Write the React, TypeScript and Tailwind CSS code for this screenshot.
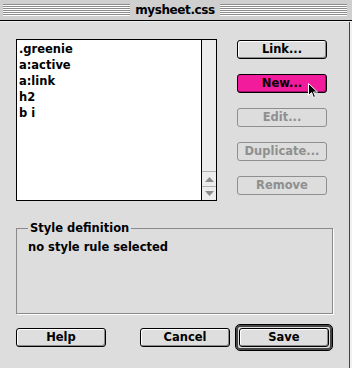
import React from 'react';

const font = "font-['DejaVu_Sans',sans-serif] font-bold text-[11.5px]";

const Stripes: React.FC<{ className?: string }> = ({ className = '' }) => (
  <div className={`flex flex-col ${className}`}>
    {[0, 1, 2, 3, 4, 5].map((i) => (
      <div key={i} className="h-[2px] border-t border-[#8c8c8c] border-b border-b-white" />
    ))}
  </div>
);

const Button: React.FC<{ label: string; disabled?: boolean; pink?: boolean; className?: string }> = ({
  label,
  disabled,
  pink,
  className = '',
}) => {
  if (disabled) {
    return (
      <div className={`w-[90px] h-[19px] rounded-[3px] border border-[#8f8f8f] flex items-center justify-center text-[#8f8f8f] ${className}`}>
        {label}
      </div>
    );
  }
  return (
    <div
      className={`w-[90px] h-[19px] rounded-[3px] border border-black flex items-center justify-center text-black ${
        pink
          ? 'bg-[#f11b9c] shadow-[inset_-1px_-1px_0_#a80f6a]'
          : 'bg-[#dedede] shadow-[inset_1px_1px_0_#ffffff,inset_-1px_-1px_0_#8a8a8a]'
      } ${className}`}
    >
      {label}
    </div>
  );
};

export default function App() {
  const rules = ['.greenie', 'a:active', 'a:link', 'h2', 'b i'];

  return (
    <div className={`w-[352px] h-[368px] bg-[#dddddd] flex flex-col overflow-hidden ${font}`}>
      {/* Title bar */}
      <div className="h-[21px] bg-[#cfcfcf] flex items-center pl-[3px] pr-[5px] border-b border-black">
        <Stripes className="flex-1" />
        <div className="px-[5px] text-[12px] tracking-[-0.4px] leading-none text-black">mysheet.css</div>
        <Stripes className="flex-1" />
      </div>
      <div className="h-px bg-[#eeeeee]" />

      <div className="flex flex-1">
        {/* Content */}
        <div className="w-[349px] flex flex-col pl-4 pt-[17px]">
          <div className="flex">
            {/* Rule list */}
            <div className="w-[201px] h-[162px] border border-black flex bg-white">
              <div className="flex-1 pt-[1px] pl-[2px] flex flex-col">
                {rules.map((r) => (
                  <div key={r} className="h-4 leading-4 text-black">
                    {r}
                  </div>
                ))}
              </div>
              <div className="w-[15px] border-l border-black bg-[#ececec] flex flex-col justify-end">
                <div className="h-[15px] border-t border-[#b0b0b0] flex items-center justify-center">
                  <svg width="9" height="5" viewBox="0 0 9 5">
                    <path d="M4.5 0 L9 5 L0 5 Z" fill="#8c8c8c" />
                  </svg>
                </div>
                <div className="h-[14px] border-t border-[#b0b0b0] flex items-center justify-center">
                  <svg width="9" height="5" viewBox="0 0 9 5">
                    <path d="M0 0 L9 0 L4.5 5 Z" fill="#8c8c8c" />
                  </svg>
                </div>
              </div>
            </div>

            {/* Buttons */}
            <div className="ml-5 pt-px flex flex-col gap-[15px]">
              <Button label="Link..." />
              <div className="relative">
                <Button label="New..." pink />
                <svg className="absolute left-[71px] top-[9px]" width="11" height="16" viewBox="0 0 11 16">
                  <path d="M0.5 0.5 L0.5 12.5 L3.5 9.5 L5.5 14.5 L7.5 13.5 L5.5 9 L9.5 9 Z" fill="black" stroke="white" strokeWidth="1" />
                </svg>
              </div>
              <Button label="Edit..." disabled />
              <Button label="Duplicate..." disabled />
              <Button label="Remove" disabled />
            </div>
          </div>

          {/* Style definition group */}
          <fieldset className="mt-[20px] w-[317px] h-[93px] border border-[#8a8a8a] shadow-[1px_1px_0_#ffffff] pl-[11px] pr-2">
            <legend className="px-[2px] text-black leading-[14px]">Style definition</legend>
            <div className="pt-[4px] text-black">no style rule selected</div>
          </fieldset>

          {/* Bottom buttons */}
          <div className="mt-[10px] flex items-center">
            <Button label="Help" />
            <Button label="Cancel" className="ml-[34px]" />
            <div className="ml-[5px] p-[3px] rounded-[5px] border-[1px] border-black shadow-[inset_0_0_0_2px_#444]">
              <Button label="Save" />
            </div>
          </div>
        </div>
        <div className="w-px bg-[#444444]" />
        <div className="w-[2px] bg-[#f0f0f0]" />
      </div>
    </div>
  );
}
